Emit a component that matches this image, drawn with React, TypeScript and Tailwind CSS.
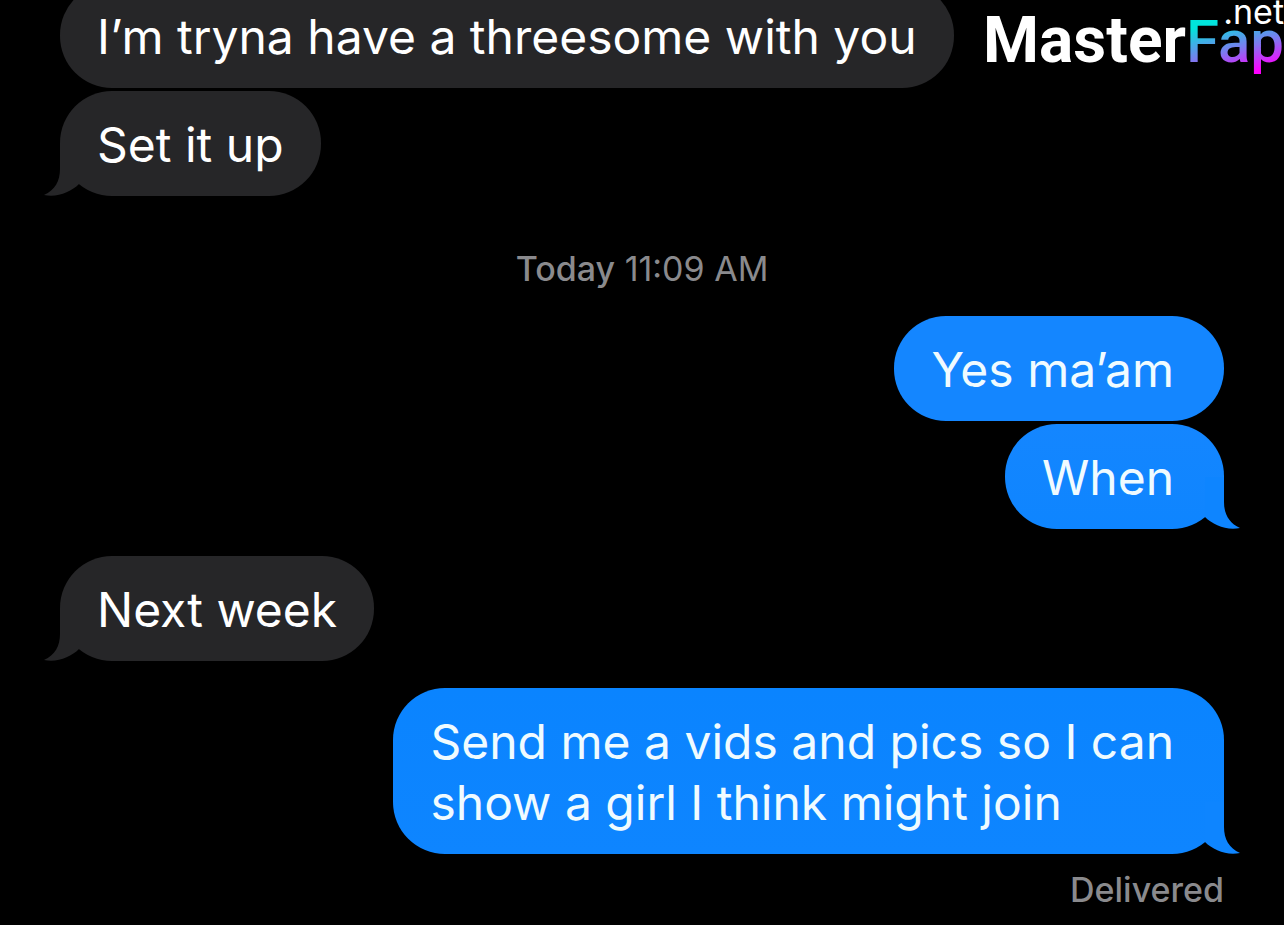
import React from 'react';

interface BubbleProps {
  text: string;
  sent?: boolean;
  tail?: boolean;
  color: string;
}

function Bubble({ text, sent = false, tail = false, color }: BubbleProps) {
  return (
    <div
      className={`relative w-fit rounded-[52px] pt-[23px] pb-[21px] pl-[37px] text-[48px] leading-[61px] whitespace-pre-line ${color} ${
        sent ? 'self-end pr-[50px] text-[#f0fbff]' : 'self-start pr-[37px] text-white'
      }`}
    >
      {text}
      {tail && (
        <svg
          viewBox="0 0 36 52"
          className={`absolute bottom-0 h-[52px] w-9 ${
            sent ? '-right-4 -scale-x-100 text-[#0e85ff]' : '-left-4 text-[#262628]'
          }`}
          aria-hidden="true"
        >
          <path
            d="M16 0V25C16 37 11 46 0 51C13 54 27 48 35 40V0Z"
            fill="currentColor"
          />
        </svg>
      )}
    </div>
  );
}

function Watermark() {
  return (
    <div className="absolute top-0 right-0 font-[Roboto,sans-serif] whitespace-nowrap">
      <div className="flex items-baseline pt-1 leading-[74px]">
        <span className="text-[64px] font-bold text-white">Master</span>
        <span className="bg-linear-[165deg] from-[#00e5dc] from-25% via-[#7f78f0] via-58% to-[#ff00ff] to-85% bg-clip-text text-[60px] font-medium text-transparent">
          Fap
        </span>
      </div>
      <span className="absolute top-0 right-0 font-[Inter,sans-serif] text-[34px] leading-6 text-white">
        .net
      </span>
    </div>
  );
}

export default function App() {
  return (
    <div className="relative min-h-screen overflow-hidden bg-black font-[Inter,sans-serif]">
      <main className="-mt-[17px] flex flex-col gap-[27px] px-15">
        <section className="flex flex-col gap-[3px]">
          <Bubble text="I’m tryna have a threesome with you" color="bg-[#262628]" />
          <Bubble text="Set it up" color="bg-[#262628]" tail />
        </section>

        <p className="pt-[26px] text-center text-[34px] leading-10 text-[#8a8a8d]">
          <span className="font-medium">Today</span> 11:09 AM
        </p>

        <section className="flex flex-col gap-[3px]">
          <Bubble text="Yes ma’am" color="bg-[#1486ff]" sent />
          <Bubble text="When" color="bg-linear-to-b from-[#1486ff] to-[#0e85ff]" sent tail />
        </section>

        <Bubble text="Next week" color="bg-[#262628]" tail />

        <section className="flex flex-col">
          <Bubble
            text={'Send me a vids and pics so I can\nshow a girl I think might join'}
            color="bg-linear-to-b from-[#0a84ff] to-[#0e85ff]"
            sent
            tail
          />
          <p className="mt-4 text-right text-[34px] leading-10 font-medium text-[#8a8a8d]">
            Delivered
          </p>
        </section>
      </main>
      <Watermark />
    </div>
  );
}
